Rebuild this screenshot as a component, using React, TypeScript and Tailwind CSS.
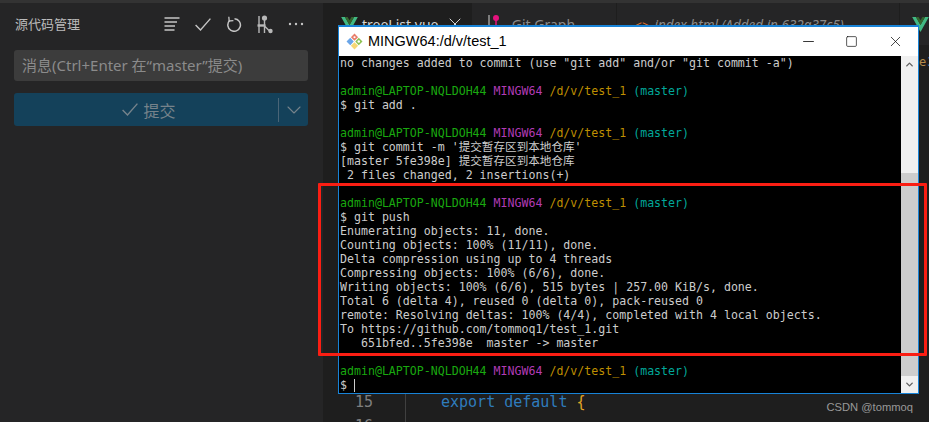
import React from 'react';
import { ChevronDown, ChevronUp, Minus, Square, X } from 'lucide-react';

type Seg = { t: string; c: string };

const prompt: Seg[] = [
  { t: 'admin@LAPTOP-NQLDOH44 ', c: 'text-[#19a80f]' },
  { t: 'MINGW64 ', c: 'text-[#b13bb5]' },
  { t: '/d/v/test_1 ', c: 'text-[#bf8f00]' },
  { t: '(master)', c: 'text-[#00a89a]' },
];

const plain = (t: string): Seg[] => [{ t, c: 'text-[#cccccc]' }];

const lines: Seg[][] = [
  plain('no changes added to commit (use "git add" and/or "git commit -a")'),
  plain(''),
  prompt,
  plain('$ git add .'),
  plain(''),
  prompt,
  plain("$ git commit -m '提交暂存区到本地仓库'"),
  plain('[master 5fe398e] 提交暂存区到本地仓库'),
  plain(' 2 files changed, 2 insertions(+)'),
  plain(''),
  prompt,
  plain('$ git push'),
  plain('Enumerating objects: 11, done.'),
  plain('Counting objects: 100% (11/11), done.'),
  plain('Delta compression using up to 4 threads'),
  plain('Compressing objects: 100% (6/6), done.'),
  plain('Writing objects: 100% (6/6), 515 bytes | 257.00 KiB/s, done.'),
  plain('Total 6 (delta 4), reused 0 (delta 0), pack-reused 0'),
  plain('remote: Resolving deltas: 100% (4/4), completed with 4 local objects.'),
  plain('To https://github.com/tommoq1/test_1.git'),
  plain('   651bfed..5fe398e  master -> master'),
  plain(''),
  prompt,
];

const VueIcon = () => (
  <svg viewBox="0 0 20 18" className="h-[15px] w-[17px] shrink-0">
    <path d="M0 0h4.5L10 9.5 15.5 0H20L10 18z" fill="#41b883" />
    <path d="M4.5 0h3.2L10 4l2.3-4h3.2L10 9.5z" fill="#35662f" />
  </svg>
);

const ListIcon = () => (
  <svg viewBox="0 0 16 16" className="h-4 w-4 text-[#c5c5c5]" fill="none" stroke="currentColor" strokeWidth="1.3">
    <path d="M0.5 2h15M0.5 6h12.5M0.5 10h10.5M0.5 14h10" />
  </svg>
);

const CheckMark = ({ className }: { className: string }) => (
  <svg viewBox="0 0 16 13" className={className} fill="none" stroke="currentColor" strokeWidth="1.4">
    <path d="M0.6 7L5.5 12 15.4 0.6" />
  </svg>
);

const RefreshIcon = () => (
  <svg viewBox="0 0 16 16" className="h-4 w-4 text-[#c5c5c5]" fill="none" stroke="currentColor" strokeWidth="1.5">
    <path d="M8.5 2.7A6.3 6.3 0 1 1 3.6 4.6" />
    <path d="M2.8 0.8L3.2 5 7.4 4.6" strokeWidth="1.3" />
  </svg>
);

const GraphIcon = () => (
  <svg viewBox="0 0 16 19" className="h-[19px] w-4 text-[#b8b8b8]" fill="none" stroke="currentColor" strokeWidth="1.4">
    <path d="M2 1v17M7.5 3v15M7.5 11l5 5" />
    <path d="M0.5 10.5h8" strokeWidth="2.4" />
    <circle cx="7.5" cy="3" r="2.6" fill="currentColor" stroke="none" />
    <circle cx="13.5" cy="16" r="2.2" fill="currentColor" stroke="none" />
  </svg>
);

const DotsIcon = () => (
  <svg viewBox="0 0 16 16" className="h-4 w-4 text-[#c5c5c5]" fill="currentColor">
    <circle cx="2" cy="8" r="1.2" />
    <circle cx="8" cy="8" r="1.2" />
    <circle cx="14" cy="8" r="1.2" />
  </svg>
);

const GitGraphIcon = () => (
  <svg viewBox="0 0 16 22" className="h-[22px] w-4 shrink-0" fill="none">
    <path d="M4 2v14" stroke="#9a9a9a" strokeWidth="1.5" />
    <path d="M11 6v12" stroke="#e5127d" strokeWidth="1.5" />
    <circle cx="11" cy="5" r="3" fill="#e5127d" />
    <circle cx="4" cy="17" r="3" fill="#0f7bc4" />
  </svg>
);

const MingwIcon = () => (
  <svg viewBox="0 0 16 16" className="h-[17px] w-[17px] shrink-0">
    <path d="M8 0.5l3.4 3.4L8 7.3 4.6 3.9z" fill="#e87d6a" />
    <path d="M12 4.5L15.5 8 12 11.5 8.7 8z" fill="#8cc152" />
    <path d="M4 4.5L7.3 8 4 11.5.5 8z" fill="#6aa5e8" />
    <path d="M8 8.7l3.4 3.4L8 15.5l-3.4-3.4z" fill="#f7d774" />
    <circle cx="12" cy="8" r="1.2" fill="#fff" />
    <circle cx="8" cy="4" r="1" fill="#fff" />
  </svg>
);

const Terminal = () => (
  <div className="absolute left-[338px] top-[25px] flex h-[369px] w-[581px] flex-col border border-t-2 border-[#1883d7] border-t-[#1883d7] bg-black">
    <div className="flex h-[29px] shrink-0 items-center bg-white pl-[7px] text-black">
      <MingwIcon />
      <span className="ml-[5px] font-['Liberation_Sans','Noto_Sans_CJK_SC',sans-serif] text-[14.5px]">MINGW64:/d/v/test_1</span>
      <div className="ml-auto flex items-center">
        <Minus size={17} strokeWidth={1.1} className="mr-[28px]" />
        <Square size={13} strokeWidth={1.2} className="mr-[29px]" />
        <X size={17} strokeWidth={1} className="mr-[14px]" />
      </div>
    </div>
    <div className="flex min-h-0 flex-1">
      <div className="min-w-0 flex-1 pl-px font-['DejaVu_Sans_Mono','Noto_Sans_CJK_SC',monospace] text-[11.6px] leading-[14px]">
        {lines.map((segs, i) => (
          <div key={i} className="h-[14px] whitespace-pre">
            {segs.map((s, j) => (
              <span key={j} className={s.c}>{s.t}</span>
            ))}
          </div>
        ))}
        <div className="flex h-[14px] items-center whitespace-pre text-[#cccccc]">
          $ <span className="h-[13px] w-px bg-[#cccccc]" />
        </div>
      </div>
      <div className="flex w-[17px] shrink-0 flex-col bg-[#f0f0f0]">
        <div className="flex h-[17px] items-center justify-center">
          <ChevronUp size={11} strokeWidth={3} className="text-[#606060]" />
        </div>
        <div className="mt-[100px] flex-1 bg-[#cdcdcd]" />
        <div className="flex h-[17px] items-center justify-center">
          <ChevronDown size={11} strokeWidth={3} className="text-[#606060]" />
        </div>
      </div>
    </div>
  </div>
);

const Sidebar = () => (
  <div className="flex w-[323px] shrink-0 flex-col bg-[#252526] pl-[14px] pr-[12px]">
    <div className="flex h-[42px] items-center justify-between">
      <span className="pl-px text-[13px] text-[#bbbbbb]">源代码管理</span>
      <div className="flex items-center">
        <div className="flex w-[31px] justify-center"><ListIcon /></div>
        <div className="flex w-[31px] justify-center text-[#c5c5c5]"><CheckMark className="h-[13px] w-4" /></div>
        <div className="flex w-[31px] justify-center"><RefreshIcon /></div>
        <div className="flex w-[31px] justify-center"><GraphIcon /></div>
        <div className="flex w-[31px] justify-center"><DotsIcon /></div>
      </div>
    </div>
    <div className="mt-[5px] flex h-[31px] w-[294px] items-center rounded-[3px] bg-[#3c3c3c] pl-[8px] font-['Noto_Sans','Noto_Sans_CJK_SC',sans-serif] text-[15px] text-[#8b8b8b]">
      消息(Ctrl+Enter 在“master”提交)
    </div>
    <div className="mt-[12px] flex h-[33px] w-[294px] items-center rounded-[3px] bg-[#14415a] text-[#76838b]">
      <div className="flex flex-1 items-center justify-center gap-[5px] pl-[6px] text-[16px]">
        <CheckMark className="h-[13px] w-4" />
        提交
      </div>
      <div className="h-[24px] w-px bg-[#4a6577]" />
      <div className="flex w-[29px] justify-center">
        <ChevronDown size={24} strokeWidth={1.1} />
      </div>
    </div>
  </div>
);

const Tabs = () => (
  <div className="flex h-[42px] shrink-0 bg-[#252526] font-['Noto_Sans','Noto_Sans_CJK_SC',sans-serif] text-[14px]">
    <div className="flex w-[150px] items-start gap-[4px] bg-[#1e1e1e] pl-[18px] pt-[14px] text-[#d4d4d4]">
      <VueIcon />
      <span className="leading-[16px]">treeList.vue</span>
      <X size={20} strokeWidth={1.2} className="-mt-[3px] ml-[3px]" />
    </div>
    <div className="flex w-[146px] items-start gap-[11px] border-r border-[#1e1e1e] pl-[13px] pt-[10px] text-[#8a8a8a]">
      <GitGraphIcon />
      <span className="pt-[4px] leading-[16px]">Git Graph</span>
    </div>
    <div className="flex w-[286px] items-start gap-[8px] border-r border-[#1e1e1e] pl-[18px] pt-[14px] text-[13.5px] italic text-[#8a8a8a]">
      <span className="w-[12px] text-[13px] not-italic leading-[16px] text-[#e37933]">&lt;&gt;</span>
      <span className="leading-[16px]">index.html (Added in 632a37c5)</span>
    </div>
    <div className="pl-[12px] pt-[14px]">
      <VueIcon />
    </div>
  </div>
);

const Editor = () => (
  <div className="flex min-h-0 flex-1 flex-col justify-between bg-[#1e1e1e] font-['DejaVu_Sans_Mono',monospace] text-[15px] leading-[24px]">
    <div className="mt-[5px] flex h-[24px] gap-[1px] pl-[596px] text-[12px]">
      <span className="text-[#b58a4a]">e</span>
      <span className="text-[#3a7ab0]">3</span>
    </div>
    <div>
      <div className="flex h-[24px]">
        <span className="w-[50px] text-right text-[#7e7e7e]">15</span>
        <span className="ml-[32px] border-l border-[#404040] pl-[35px] text-[#2f7cbd]">
          export default <span className="text-[#e0a526]">{'{'}</span>
        </span>
      </div>
      <div className="flex h-[8px] overflow-hidden">
        <span className="w-[50px] text-right text-[#7e7e7e]">16</span>
        <span className="ml-[32px] border-l border-[#404040]" />
      </div>
    </div>
  </div>
);

export default function App() {
  return (
    <div className="relative flex h-[422px] w-[929px] flex-col overflow-hidden bg-[#1e1e1e] font-['Noto_Sans_CJK_SC','Noto_Sans',sans-serif]">
      <div className="h-[3px] shrink-0 bg-[#333333]" />
      <div className="flex min-h-0 flex-1">
        <Sidebar />
        <div className="flex min-w-0 flex-1 flex-col">
          <Tabs />
          <Editor />
        </div>
      </div>
      <Terminal />
      {/* red annotation box */}
      <div className="absolute left-[318px] top-[183px] h-[173px] w-[609px] rounded-[1px] border-[3px] border-[#fb1e13]" />
      <span className="absolute right-[16px] top-[399px] font-['Liberation_Sans',sans-serif] text-[11.2px] text-[#999999]">CSDN @tommoq</span>
    </div>
  );
}
